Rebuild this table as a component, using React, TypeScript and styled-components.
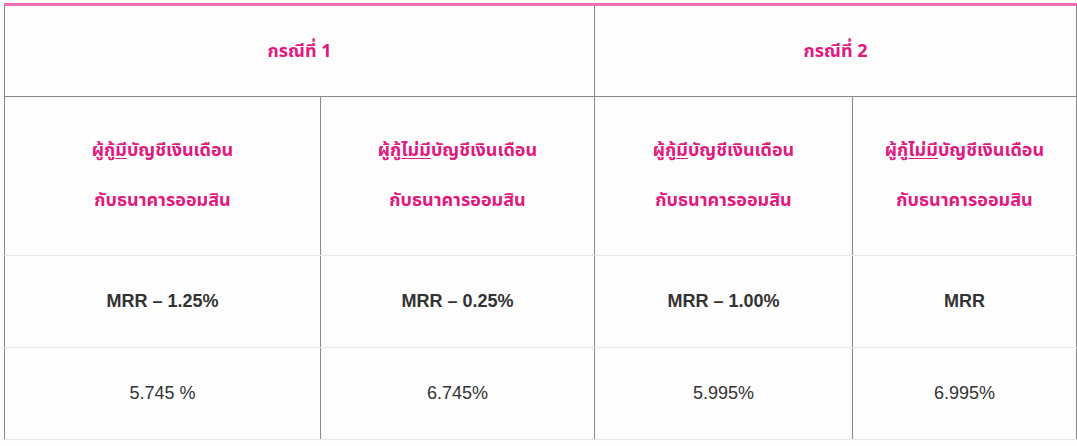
import React from 'react';
import styled, { createGlobalStyle } from 'styled-components';

const GlobalStyle = createGlobalStyle`
  body {
    margin: 0;
    background: #fdfdfd;
    font-family: "Liberation Sans", Arial, sans-serif;
  }
`;

const Wrapper = styled.div`
  padding: 3px 1px 0 4px;
`;

const RateTable = styled.table`
  width: 1072px;
  table-layout: fixed;
  border-collapse: collapse;
  border-top: 3px solid #ee6fb4;
`;

const HeadCell = styled.th<{ $dark?: boolean }>`
  height: ${(p) => (p.$dark ? '90px' : '158px')};
  padding: 0 8px;
  border-left: 1px solid #888;
  border-right: 1px solid #888;
  border-bottom: 1px solid ${(p) => (p.$dark ? '#888' : '#e6e6e6')};
  color: #e0197f;
  font-family: "Noto Sans Thai", "Noto Sans", "Liberation Sans", sans-serif;
  font-size: 18px;
  font-weight: 700;
  text-align: center;
  vertical-align: middle;
`;

const Line = styled.p`
  margin: 0;
  line-height: 50px;
`;

const Mark = styled.span`
  text-decoration: underline;
  text-underline-offset: 2px;
`;

const Cell = styled.td<{ $bold?: boolean }>`
  height: 91px;
  padding: 0 8px;
  border-left: 1px solid #888;
  border-right: 1px solid #888;
  border-bottom: 1px solid #e6e6e6;
  color: #333;
  font-size: 18px;
  font-weight: ${(p) => (p.$bold ? 700 : 400)};
  text-align: center;
  vertical-align: middle;
`;

const columns = [
  { mark: 'มี', rate: 'MRR – 1.25%', value: '5.745 %' },
  { mark: 'ไม่มี', rate: 'MRR – 0.25%', value: '6.745%' },
  { mark: 'มี', rate: 'MRR – 1.00%', value: '5.995%' },
  { mark: 'ไม่มี', rate: 'MRR', value: '6.995%' },
];

const App = () => (
  <Wrapper>
    <GlobalStyle />
    <RateTable>
      <colgroup>
        <col style={{ width: 316 }} />
        <col style={{ width: 274 }} />
        <col style={{ width: 258 }} />
        <col style={{ width: 224 }} />
      </colgroup>
      <thead>
        <tr>
          <HeadCell $dark colSpan={2}>กรณีที่ 1</HeadCell>
          <HeadCell $dark colSpan={2}>กรณีที่ 2</HeadCell>
        </tr>
        <tr>
          {columns.map((c, i) => (
            <HeadCell key={i}>
              <Line>
                ผู้กู้<Mark>{c.mark}</Mark>บัญชีเงินเดือน
              </Line>
              <Line>กับธนาคารออมสิน</Line>
            </HeadCell>
          ))}
        </tr>
      </thead>
      <tbody>
        <tr>
          {columns.map((c, i) => (
            <Cell key={i} $bold>
              {c.rate}
            </Cell>
          ))}
        </tr>
        <tr>
          {columns.map((c, i) => (
            <Cell key={i}>{c.value}</Cell>
          ))}
        </tr>
      </tbody>
    </RateTable>
  </Wrapper>
);

export default App;
